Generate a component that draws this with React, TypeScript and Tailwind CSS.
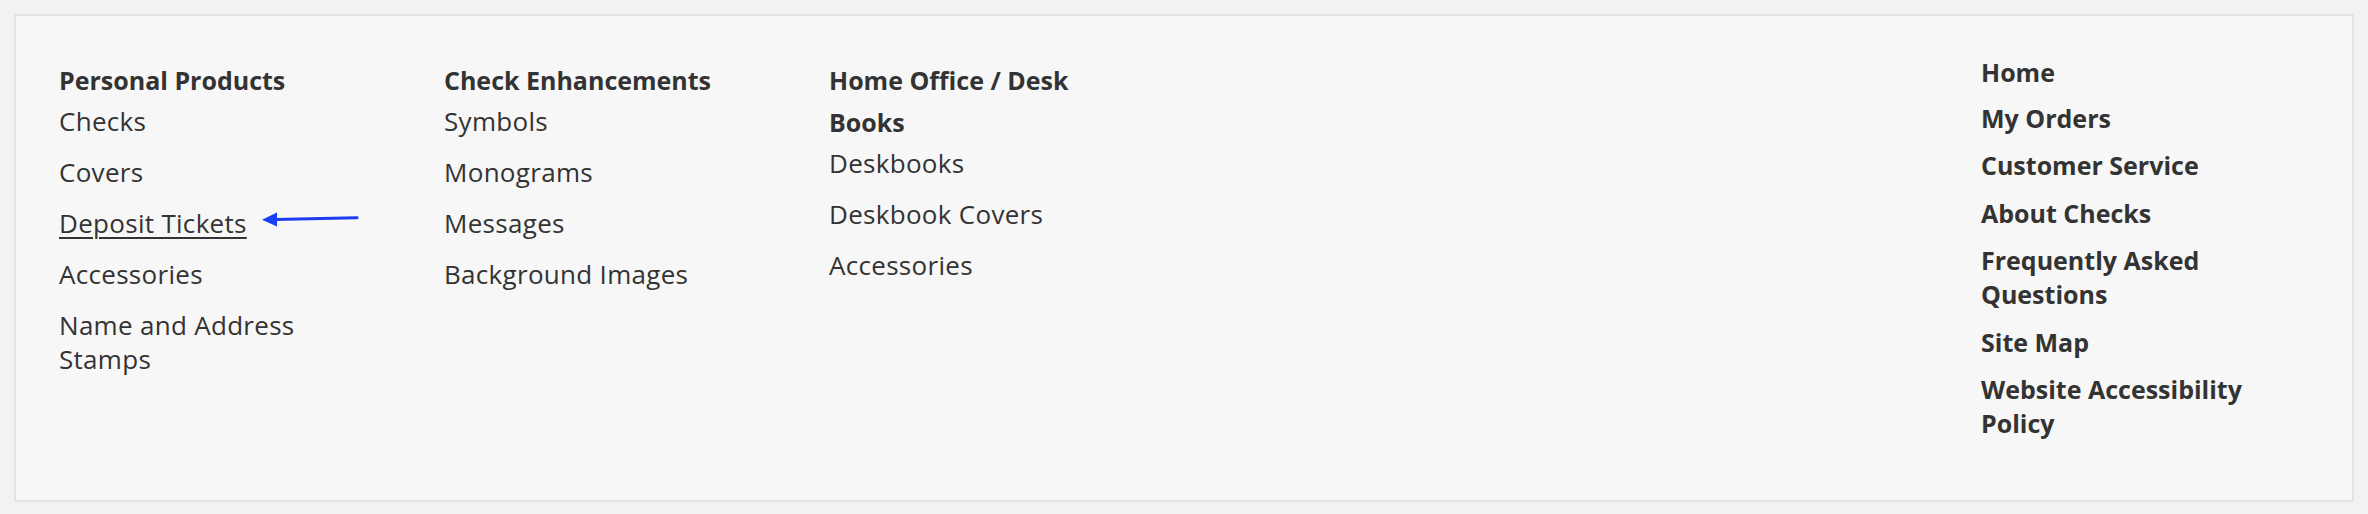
import React from "react";

interface Column {
  title: string;
  links: string[];
}

const columns: Column[] = [
  {
    title: "Personal Products",
    links: ["Checks", "Covers", "Deposit Tickets", "Accessories", "Name and Address Stamps"],
  },
  {
    title: "Check Enhancements",
    links: ["Symbols", "Monograms", "Messages", "Background Images"],
  },
  {
    title: "Home Office / Desk Books",
    links: ["Deskbooks", "Deskbook Covers", "Accessories"],
  },
];

const helpLinks = [
  "Home",
  "My Orders",
  "Customer Service",
  "About Checks",
  "Frequently Asked Questions",
  "Site Map",
  "Website Accessibility Policy",
];

function Arrow() {
  return (
    <svg
      className="absolute left-full top-[7px] ml-[15px]"
      width="98"
      height="16"
      viewBox="0 0 98 16"
    >
      <line x1="13" y1="7.6" x2="95" y2="5.8" stroke="#1a3df5" strokeWidth="3" strokeLinecap="round" />
      <polygon points="0,7.8 15,0.5 15,14.5" fill="#1a3df5" />
    </svg>
  );
}

export default function App() {
  return (
    <div
      className="bg-[#f2f2f2] px-[14px] pt-[14px] pb-[12px] text-[#333333]"
      style={{ fontFamily: '"Open Sans", Arial, sans-serif' }}
    >
      <div className="h-[488px] border-2 border-[#e4e4e4] bg-[#f7f7f7] pl-[43px] pt-[43px]">
        <div className="grid grid-cols-[repeat(6,300px)] gap-x-[85px]">
          {columns.map((col) => (
            <div key={col.title}>
              <h3 className="text-[25px] font-bold leading-[42px]">{col.title}</h3>
              <ul className="mt-[3px] flex flex-col gap-[17px] text-[26px] tracking-[0.3px]">
                {col.links.map((link) => (
                  <li key={link} className="leading-[34px]">
                    {link === "Deposit Tickets" ? (
                      <a href="#" className="relative underline decoration-[1.5px] underline-offset-[4px]">
                        {link}
                        <Arrow />
                      </a>
                    ) : (
                      <a href="#">{link}</a>
                    )}
                  </li>
                ))}
              </ul>
            </div>
          ))}
          <ul className="col-start-6 -ml-[3px] -mt-1 flex flex-col gap-[13.5px] text-[25px]">
            {helpLinks.map((link, i) => (
              <li key={link} className={`font-bold leading-[34px] ${i === 1 ? "-mt-[2px]" : ""}`}>
                <a href="#">{link}</a>
              </li>
            ))}
          </ul>
        </div>
      </div>
    </div>
  );
}
